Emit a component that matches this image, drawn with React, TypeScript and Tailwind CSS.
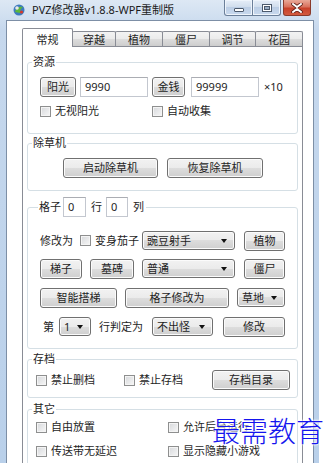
import React from 'react';

const btnCls =
  'h-[20px] rounded-[3px] border border-[#707070] bg-[linear-gradient(#f2f2f2,#ebebeb_50%,#dddddd_50%,#cfcfcf)] shadow-[inset_0_0_0_1px_#fbfbfb] text-[#1e1e1e] flex items-center justify-center shrink-0';

const Btn = ({ children, className = '' }: { children: React.ReactNode; className?: string }) => (
  <button className={`${btnCls} ${className}`}>{children}</button>
);

const Combo = ({ value, className = '' }: { value: string; className?: string }) => (
  <div
    className={`h-[19px] rounded-[3px] border border-[#707070] bg-[linear-gradient(#f2f2f2,#ebebeb_50%,#dddddd_50%,#cfcfcf)] shadow-[inset_0_0_0_1px_#fbfbfb] text-[#1e1e1e] flex items-center justify-between pl-[4px] pr-[7px] shrink-0 ${className}`}
  >
    <span>{value}</span>
    <svg width="6" height="4" viewBox="0 0 6 4">
      <path d="M0 0h6L3 4z" fill="#111" />
    </svg>
  </div>
);

const Field = ({ value, className = '' }: { value: string; className?: string }) => (
  <div
    className={`h-[20px] border border-[#c3c7cf] border-t-[#abadb3] bg-white flex items-center pl-[4px] text-[#1e1e1e] shrink-0 ${className}`}
  >
    {value}
  </div>
);

const Check = ({ label, className = '' }: { label: string; className?: string }) => (
  <div className={`flex items-center h-[14px] shrink-0 ${className}`}>
    <span className="w-[11px] h-[11px] border border-[#8e8f8f] bg-[linear-gradient(135deg,#d6d8db,#f7f7f7)] shadow-[inset_0_0_0_1px_#f4f4f4] shrink-0" />
    <span className="ml-[4px] text-[#1e1e1e]">{label}</span>
  </div>
);

const Tab = ({ label, active = false, className = '' }: { label: string; active?: boolean; className?: string }) =>
  active ? (
    <div
      className={`relative z-10 h-[19px] -mb-px bg-white border border-b-0 border-[#898c95] rounded-t-[2px] flex justify-center pt-[4px] text-[#1e1e1e] ${className}`}
    >
      {label}
    </div>
  ) : (
    <div
      className={`h-[15px] -ml-px bg-[linear-gradient(#f3f3f3,#ebebeb_50%,#dddddd_50%,#cdcdcd)] border border-b-0 border-[#898c95] rounded-t-[2px] flex justify-center pt-[1px] text-[#1e1e1e] ${className}`}
    >
      {label}
    </div>
  );

export default function App() {
  return (
    <div className="relative w-[334px] h-[463px] overflow-hidden bg-white font-['Noto_Sans','Noto_Sans_CJK_SC',sans-serif] text-[11px] leading-[14px]">
      <div className="w-[319px] h-full flex flex-col bg-[linear-gradient(180deg,#dde8f4,#c6d8ed_30px,#b9d0ea)]">
        {/* title bar */}
        <div className="h-[20px] flex items-start shrink-0">
          <svg className="ml-[13px] mt-[4px]" width="12" height="12" viewBox="0 0 12 12">
            <circle cx="6" cy="6" r="5.5" fill="#3d7bbf" />
            <path d="M2 8c1-4 4-6 8-5-2 1-3 3-3 6z" fill="#5cb83a" />
            <circle cx="4" cy="4" r="1.8" fill="#e8e8e8" />
            <circle cx="8.5" cy="8" r="1.6" fill="#d83a2a" />
          </svg>
          <span className="ml-[7px] mt-[3px] text-[#1a1a1a]">PVZ修改器v1.8.8-WPF重制版</span>
          <div className="ml-auto mr-[8px] flex items-start">
            <div className="w-[29px] h-[16px] rounded-bl-[3px] border border-t-0 border-[#6b7f99] bg-[linear-gradient(#e6eef8,#cfdcec_50%,#bccee5_50%,#c9d9ee)] shadow-[inset_0_0_0_1px_#eef4fb] flex items-center justify-center">
              <span className="w-[10px] h-[4px] mt-[5px] bg-white border border-[#4c5a6d] rounded-[1px]" />
            </div>
            <div className="w-[29px] h-[16px] -ml-px rounded-br-[3px] border border-t-0 border-[#6b7f99] bg-[linear-gradient(#e6eef8,#cfdcec_50%,#bccee5_50%,#c9d9ee)] shadow-[inset_0_0_0_1px_#eef4fb] flex items-center justify-center">
              <span className="w-[10px] h-[8px] border border-[#4c5a6d] bg-white flex items-center justify-center">
                <span className="w-[6px] h-[4px] bg-[#9aaec6] border border-[#4c5a6d]" />
              </span>
            </div>
            <div className="w-[28px] h-[16px] ml-[2px] rounded-b-[3px] border border-t-0 border-[#8a3a2b] bg-[linear-gradient(#e9a998,#d9725d_45%,#c8412a_55%,#d25b3f)] flex items-center justify-center">
              <svg width="12" height="10" viewBox="0 0 12 10">
                <path d="M2 1l4 3 4-3M2 9l4-3 4 3" stroke="#5a2018" strokeWidth="3.6" fill="none" strokeLinecap="round" />
                <path d="M2 1l4 3 4-3M2 9l4-3 4 3" stroke="#ffffff" strokeWidth="2" fill="none" strokeLinecap="round" />
              </svg>
            </div>
          </div>
        </div>

        {/* client area */}
        <div className="flex-1 ml-[6px] mr-[5px] border border-b-0 border-[#7d8fa6] bg-white pl-[15px] pr-[10px] pt-[7px]">
          <div className="flex items-end">
            <Tab label="常规" active className="w-[51px]" />
            <Tab label="穿越" className="w-[44px]" />
            <Tab label="植物" className="w-[48px]" />
            <Tab label="僵尸" className="w-[48px]" />
            <Tab label="调节" className="w-[47px]" />
            <Tab label="花园" className="w-[48px]" />
          </div>
          <div className="h-[500px] border border-[#898c95] bg-white px-[4px] pt-[8px] text-[#1e1e1e]">
            {/* 资源 */}
            <fieldset className="border border-[#d5dfe5] rounded-[3px] px-[4px] pt-[8px] pb-[15px]">
              <legend className="px-[1px]">资源</legend>
              <div className="pl-[8px]">
                <div className="flex items-center h-[20px]">
                  <Btn className="w-[36px]">阳光</Btn>
                  <Field value="9990" className="w-[68px] ml-[4px]" />
                  <Btn className="w-[33px] ml-[4px]">金钱</Btn>
                  <Field value="99999" className="w-[68px] ml-[6px]" />
                  <span className="ml-[5px]">×10</span>
                </div>
                <div className="flex items-center mt-[7px]">
                  <Check label="无视阳光" className="w-[112px]" />
                  <Check label="自动收集" />
                </div>
              </div>
            </fieldset>

            {/* 除草机 */}
            <fieldset className="mt-[2px] border border-[#d5dfe5] rounded-[3px] px-[4px] pt-[8px] pb-[12px]">
              <legend className="px-[1px]">除草机</legend>
              <div className="flex justify-center gap-[9px] pl-[1px]">
                <Btn className="w-[95px]">启动除草机</Btn>
                <Btn className="w-[96px]">恢复除草机</Btn>
              </div>
            </fieldset>

            {/* 格子 */}
            <fieldset className="mt-[6px] border border-[#d5dfe5] rounded-[3px] px-[4px] pt-[14px] pb-[12px]">
              <legend className="ml-[6px] px-[1px] flex items-center">
                <span>格子</span>
                <Field value="0" className="w-[23px] ml-[2px]" />
                <span className="ml-[5px]">行</span>
                <Field value="0" className="w-[22px] ml-[4px]" />
                <span className="ml-[5px] pr-[1px]">列</span>
              </legend>
              <div className="pl-[8px]">
                <div className="flex items-center h-[19px]">
                  <span className="w-[40px] shrink-0">修改为</span>
                  <span className="w-[11px] h-[11px] border border-[#8e8f8f] bg-[linear-gradient(135deg,#d6d8db,#f7f7f7)] shadow-[inset_0_0_0_1px_#f4f4f4] shrink-0" />
                  <span className="ml-[4px] w-[47px] shrink-0">变身茄子</span>
                  <Combo value="豌豆射手" className="w-[93px]" />
                  <Btn className="w-[41px] ml-[9px] h-[19px]">植物</Btn>
                </div>
                <div className="flex items-center h-[19px] mt-[9px]">
                  <Btn className="w-[42px] h-[19px]">梯子</Btn>
                  <Btn className="w-[44px] ml-[8px] h-[19px]">墓碑</Btn>
                  <Combo value="普通" className="w-[93px] ml-[8px]" />
                  <Btn className="w-[41px] ml-[9px] h-[19px]">僵尸</Btn>
                </div>
                <div className="flex items-center h-[19px] mt-[10px]">
                  <Btn className="w-[77px] h-[19px]">智能搭梯</Btn>
                  <Btn className="w-[104px] ml-[8px] h-[19px]">格子修改为</Btn>
                  <Combo value="草地" className="w-[48px] ml-[8px]" />
                </div>
                <div className="flex items-center h-[19px] mt-[10px]">
                  <span className="ml-[3px]">第</span>
                  <Combo value="1" className="w-[32px] ml-[5px]" />
                  <span className="ml-[8px]">行判定为</span>
                  <Combo value="不出怪" className="w-[61px] ml-[9px]" />
                  <Btn className="w-[62px] ml-[10px] h-[19px]">修改</Btn>
                </div>
              </div>
            </fieldset>

            {/* 存档 */}
            <fieldset className="mt-[3px] border border-[#d5dfe5] rounded-[3px] px-[4px] pt-[4px] pb-[7px]">
              <legend className="px-[1px]">存档</legend>
              <div className="pl-[4px] flex items-center h-[20px]">
                <Check label="禁止删档" className="w-[88px]" />
                <Check label="禁止存档" className="w-[88px]" />
                <Btn className="w-[78px]">存档目录</Btn>
              </div>
            </fieldset>

            {/* 其它 */}
            <fieldset className="mt-[4px] border border-[#d5dfe5] rounded-[3px] px-[4px] pt-[4px] pb-[8px]">
              <legend className="px-[1px]">其它</legend>
              <div className="pl-[4px]">
                <div className="flex items-center">
                  <Check label="自由放置" className="w-[132px]" />
                  <Check label="允许后台运行" />
                </div>
                <div className="flex items-center mt-[10px]">
                  <Check label="传送带无延迟" className="w-[132px]" />
                  <Check label="显示隐藏小游戏" />
                </div>
              </div>
            </fieldset>
          </div>
        </div>
      </div>

      {/* watermark */}
      <div className="absolute left-[212px] top-[416px] text-[28px] leading-none text-[#1515ee] font-['Noto_Sans_CJK_SC',sans-serif] font-light [text-shadow:0_0_2px_#fff,0_0_2px_#fff,0_0_3px_#fff]">
        最需教育
      </div>
    </div>
  );
}
